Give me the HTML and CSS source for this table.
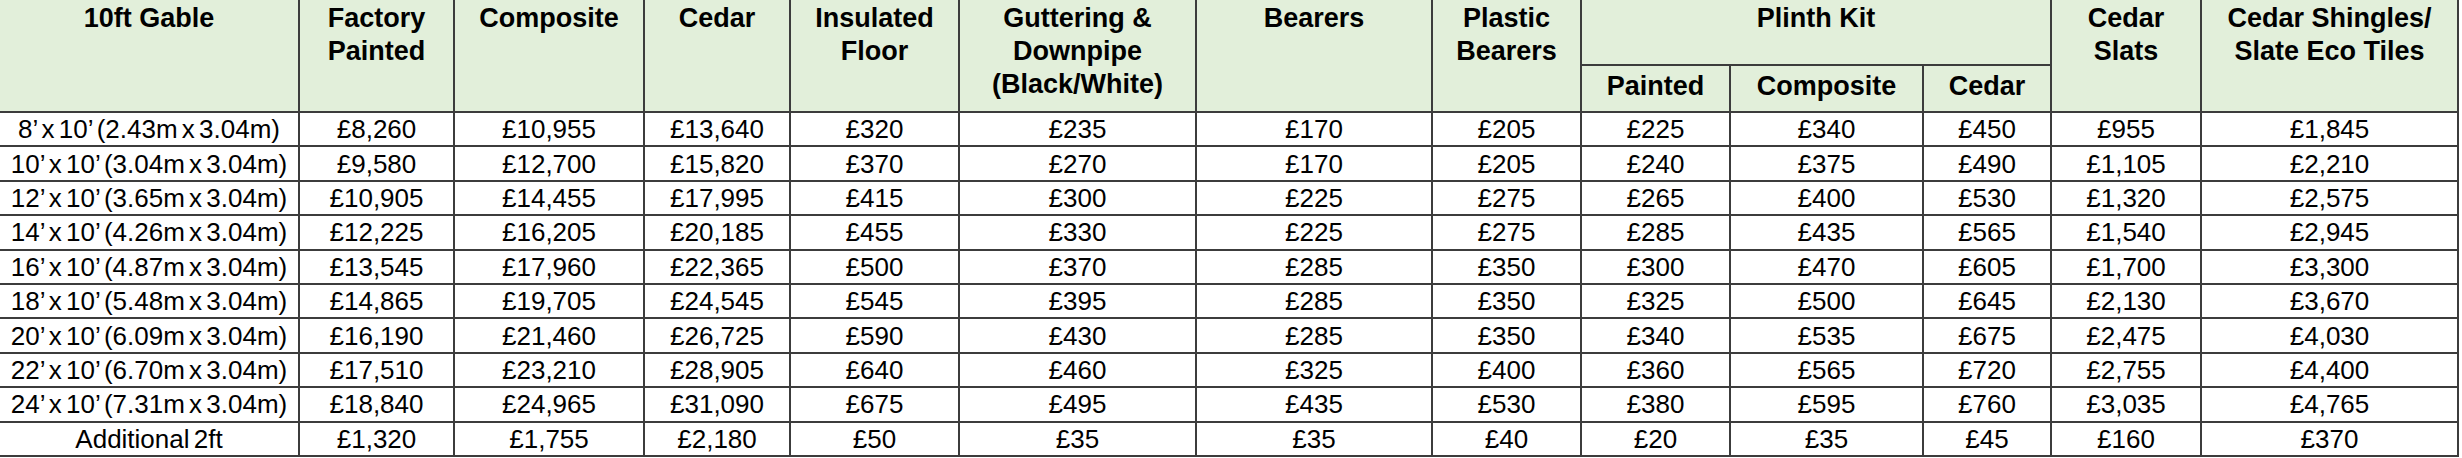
FILE: index.html
```html
<!DOCTYPE html>
<html lang="en">
<head>
<meta charset="utf-8">
<title>10ft Gable Prices</title>
<link rel="stylesheet" href="styles.css">
</head>
<body>
<table class="price-table">
  <colgroup>
    <col class="c-size"><col class="c-fp"><col class="c-comp"><col class="c-cedar"><col class="c-ins"><col class="c-gut"><col class="c-bear"><col class="c-pbear"><col class="c-pp"><col class="c-pc"><col class="c-pce"><col class="c-slats"><col class="c-shing">
  </colgroup>
  <thead>
    <tr class="head-top">
      <th rowspan="2" class="first">10ft Gable</th>
      <th rowspan="2">Factory<br>Painted</th>
      <th rowspan="2">Composite</th>
      <th rowspan="2">Cedar</th>
      <th rowspan="2">Insulated<br>Floor</th>
      <th rowspan="2">Guttering &amp;<br>Downpipe<br>(Black/White)</th>
      <th rowspan="2">Bearers</th>
      <th rowspan="2">Plastic<br>Bearers</th>
      <th colspan="3">Plinth Kit</th>
      <th rowspan="2">Cedar<br>Slats</th>
      <th rowspan="2">Cedar Shingles/<br>Slate Eco Tiles</th>
    </tr>
    <tr class="head-sub">
      <th class="sub">Painted</th>
      <th class="sub">Composite</th>
      <th class="sub">Cedar</th>
    </tr>
  </thead>
  <tbody>
    <tr><td class="first">8’ x 10’ (2.43m x 3.04m)</td><td>£8,260</td><td>£10,955</td><td>£13,640</td><td>£320</td><td>£235</td><td>£170</td><td>£205</td><td>£225</td><td>£340</td><td>£450</td><td>£955</td><td>£1,845</td></tr>
    <tr><td class="first">10’ x 10’ (3.04m x 3.04m)</td><td>£9,580</td><td>£12,700</td><td>£15,820</td><td>£370</td><td>£270</td><td>£170</td><td>£205</td><td>£240</td><td>£375</td><td>£490</td><td>£1,105</td><td>£2,210</td></tr>
    <tr><td class="first">12’ x 10’ (3.65m x 3.04m)</td><td>£10,905</td><td>£14,455</td><td>£17,995</td><td>£415</td><td>£300</td><td>£225</td><td>£275</td><td>£265</td><td>£400</td><td>£530</td><td>£1,320</td><td>£2,575</td></tr>
    <tr><td class="first">14’ x 10’ (4.26m x 3.04m)</td><td>£12,225</td><td>£16,205</td><td>£20,185</td><td>£455</td><td>£330</td><td>£225</td><td>£275</td><td>£285</td><td>£435</td><td>£565</td><td>£1,540</td><td>£2,945</td></tr>
    <tr><td class="first">16’ x 10’ (4.87m x 3.04m)</td><td>£13,545</td><td>£17,960</td><td>£22,365</td><td>£500</td><td>£370</td><td>£285</td><td>£350</td><td>£300</td><td>£470</td><td>£605</td><td>£1,700</td><td>£3,300</td></tr>
    <tr><td class="first">18’ x 10’ (5.48m x 3.04m)</td><td>£14,865</td><td>£19,705</td><td>£24,545</td><td>£545</td><td>£395</td><td>£285</td><td>£350</td><td>£325</td><td>£500</td><td>£645</td><td>£2,130</td><td>£3,670</td></tr>
    <tr><td class="first">20’ x 10’ (6.09m x 3.04m)</td><td>£16,190</td><td>£21,460</td><td>£26,725</td><td>£590</td><td>£430</td><td>£285</td><td>£350</td><td>£340</td><td>£535</td><td>£675</td><td>£2,475</td><td>£4,030</td></tr>
    <tr><td class="first">22’ x 10’ (6.70m x 3.04m)</td><td>£17,510</td><td>£23,210</td><td>£28,905</td><td>£640</td><td>£460</td><td>£325</td><td>£400</td><td>£360</td><td>£565</td><td>£720</td><td>£2,755</td><td>£4,400</td></tr>
    <tr><td class="first">24’ x 10’ (7.31m x 3.04m)</td><td>£18,840</td><td>£24,965</td><td>£31,090</td><td>£675</td><td>£495</td><td>£435</td><td>£530</td><td>£380</td><td>£595</td><td>£760</td><td>£3,035</td><td>£4,765</td></tr>
    <tr><td class="first">Additional 2ft</td><td>£1,320</td><td>£1,755</td><td>£2,180</td><td>£50</td><td>£35</td><td>£35</td><td>£40</td><td>£20</td><td>£35</td><td>£45</td><td>£160</td><td>£370</td></tr>
  </tbody>
</table>
</body>
</html>
```
FILE: styles.css
```css
html, body {
  margin: 0;
  padding: 0;
  background: #ffffff;
}

.price-table {
  border-collapse: collapse;
  table-layout: fixed;
  width: 2458px;
  font-family: "Liberation Sans", Arial, sans-serif;
  color: #000;
}

.c-size { width: 299px; }
.c-fp { width: 155px; }
.c-comp { width: 190px; }
.c-cedar { width: 146px; }
.c-ins { width: 169px; }
.c-gut { width: 237px; }
.c-bear { width: 236px; }
.c-pbear { width: 149px; }
.c-pp { width: 149px; }
.c-pc { width: 193px; }
.c-pce { width: 128px; }
.c-slats { width: 150px; }
.c-shing { width: 257px; }

.price-table th,
.price-table td {
  border: 2px solid #3c3c3c;
  padding: 0;
  text-align: center;
  white-space: nowrap;
  overflow: hidden;
}

.price-table th {
  background: #e2efda;
  font-weight: bold;
  font-size: 27px;
  line-height: 33px;
  vertical-align: top;
  padding-top: 2px;
}

.head-top th {
  border-top: none;
}

.head-top { height: 65px; }
.head-sub { height: 47px; }

.price-table th.sub {
  vertical-align: middle;
  padding-top: 0;
  padding-bottom: 4px;
}

.price-table tbody tr {
  height: 34.4px;
}

.price-table td {
  font-size: 26px;
  line-height: 30px;
  vertical-align: middle;
}

.price-table .first {
  border-left: none;
}

.price-table td.first {
  word-spacing: -3px;
}
```
